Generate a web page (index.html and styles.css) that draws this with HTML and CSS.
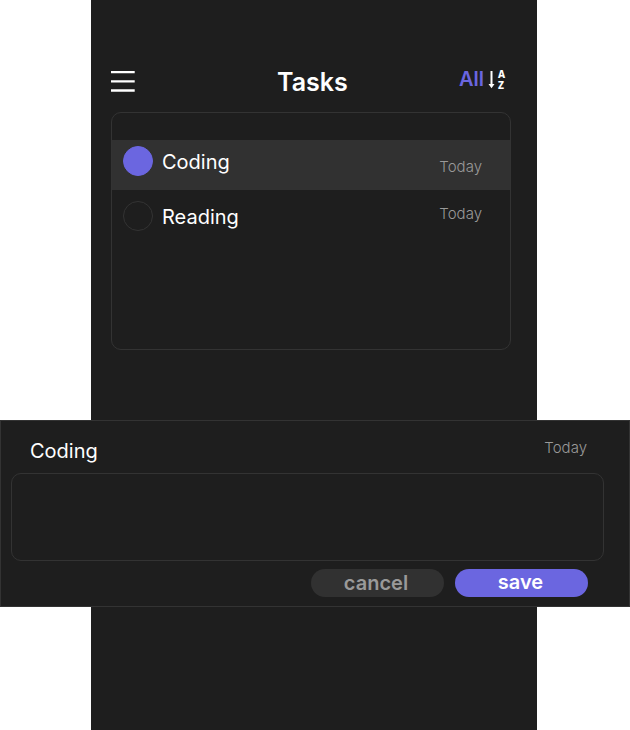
FILE: index.html
```html
<!DOCTYPE html>
<html lang="en">
<head>
<meta charset="utf-8">
<title>Tasks</title>
<link rel="stylesheet" href="styles.css">
</head>
<body>
<main class="screen">
  <header class="bar">
    <svg class="menu" width="24" height="22" viewBox="0 0 24 22"><path d="M0 2.200h23.700M0 11.400h23.700M0 20.500h23.700" stroke="#fff" stroke-width="2.300"/></svg>
    <h1 class="title">Tasks</h1>
    <div class="sort">
      <span class="all">All</span>
      <svg class="arrow" width="7" height="18" viewBox="0 0 7 18"><path d="M3.500 0v14" stroke="#fff" stroke-width="2"/><path d="M.5 13h6l-3 4.200z" fill="#fff"/></svg>
      <span class="az"><span>A</span><span>Z</span></span>
    </div>
  </header>
  <ul class="list">
    <li class="task active"><span class="dot"></span><span class="name">Coding</span><span class="day">Today</span></li>
    <li class="task"><span class="dot"></span><span class="name">Reading</span><span class="day">Today</span></li>
  </ul>
</main>
<section class="editor">
  <div class="editor-head"><span class="name">Coding</span><span class="day">Today</span></div>
  <div class="note"></div>
  <div class="actions"><button class="btn cancel">cancel</button><button class="btn save">save</button></div>
</section>
</body>
</html>
```

FILE: styles.css
```css
* { box-sizing: border-box; }
body { margin: 0; height: 730px; background: #fff; font-family: Inter, sans-serif; color: #fff; overflow: hidden; }
.screen { width: 446px; height: 730px; margin-left: 91px; padding: 68px 26px 0 20px; background: #1e1e1e; }
.bar { display: grid; grid-template-columns: 166px 1fr auto; height: 44px; padding-right: 6px; }
.menu { margin-top: 2px; }
.title { margin: 0; font-size: 25px; line-height: 29px; font-weight: 600; }
.sort { display: flex; }
.all { font-size: 20px; line-height: 22px; font-weight: 600; color: #6b66e0; }
.arrow { margin: 3px 3px 0 4px; }
.az { display: flex; flex-direction: column; font: 800 10px/11px "Noto Sans", sans-serif; padding-top: 1px; }
.list { list-style: none; margin: 0; padding: 27px 0 0; height: 238px; border: 1px solid #333; border-radius: 10px; }
.task { display: flex; height: 50px; padding: 6px 28px 0 11px; margin-bottom: 5px; }
.active { background: #313131; }
.dot { width: 30px; height: 30px; border: 1px solid #333; border-radius: 50%; margin-right: 9px; }
.active .dot { background: #6b66e0; border-color: #6b66e0; }
.name { font-size: 20px; line-height: 24px; margin-top: 4px; }
.day { font-size: 15px; line-height: 18px; font-weight: 300; color: #999; margin: 4px 0 0 auto; }
.active .day { margin-top: 12px; }
.editor { position: absolute; left: 0; top: 420px; width: 630px; height: 187px; background: #1e1e1e; border: 1px solid #333; }
.editor-head { display: flex; height: 52px; padding: 14px 42px 0 29px; }
.note { width: 593px; height: 88px; margin-left: 10px; border: 1px solid #333; border-radius: 10px; }
.actions { display: flex; gap: 11px; margin: 8px 0 0 310px; }
.btn { width: 133px; height: 28px; padding: 0 3px 0 0; border: 0; border-radius: 14px; font: 600 20px/28px Inter, sans-serif; }
.cancel { background: #313131; color: #999; }
.save { background: #6b66e0; color: #fff; line-height: 26px; padding: 0 2px 2px 0; }
```
